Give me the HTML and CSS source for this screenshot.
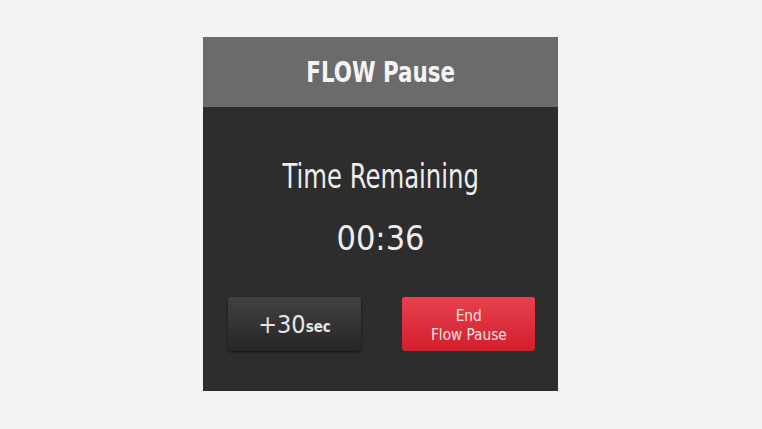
FILE: index.html
```html
<!DOCTYPE html>
<html>
<head>
<meta charset="utf-8">
<link rel="stylesheet" href="styles.css">
</head>
<body>
<div class="panel">
  <div class="header"><span class="narrow">FLOW Pause</span></div>
  <div class="body">
    <div class="label"><span class="narrow">Time Remaining</span></div>
    <div class="time">00:36</div>
    <div class="buttons">
      <div class="btn btn-dark">+30<span class="unit">sec</span></div>
      <div class="btn btn-red">
        <div class="red-text">
          <span class="red-line">End</span>
          <span class="red-line">Flow Pause</span>
        </div>
      </div>
    </div>
  </div>
</div>
</body>
</html>
```
FILE: styles.css
```css
html, body {
  margin: 0;
  padding: 0;
  background: #f3f3f1;
}
body {
  width: 762px;
  height: 429px;
  font-family: "DejaVu Sans Condensed", "Liberation Sans", sans-serif;
  font-stretch: condensed;
}
.panel {
  margin: 37px 0 0 203px;
  width: 355px;
  height: 354px;
  background: #2d2d2d;
  display: flex;
  flex-direction: column;
}
.narrow {
  display: inline-block;
  transform: scaleX(0.82);
  white-space: nowrap;
}
.header {
  height: 70px;
  background: #6b6b6b;
  color: #f4f4f4;
  font-weight: bold;
  font-size: 29px;
  display: flex;
  align-items: center;
  justify-content: center;
}
.body {
  flex: 1;
  display: flex;
  flex-direction: column;
  align-items: center;
  color: #ededed;
}
.label {
  margin-top: 52px;
  font-size: 33px;
  line-height: 36px;
}
.time {
  margin-top: 24px;
  font-size: 34px;
  line-height: 38px;
}
.buttons {
  margin-top: 40px;
  width: 100%;
  display: flex;
  justify-content: space-between;
  padding: 0 23px 0 25px;
  box-sizing: border-box;
}
.btn {
  width: 133px;
  height: 54px;
  border-radius: 3px;
  display: flex;
  align-items: center;
  justify-content: center;
  text-align: center;
  box-sizing: border-box;
}
.btn-dark {
  background: linear-gradient(#414141, #262626);
  color: #e6e6e6;
  font-size: 25px;
  box-shadow: 0 1px 3px rgba(0,0,0,0.6);
}
.unit {
  font-size: 15px;
  font-weight: bold;
  margin-top: 6px;
}
.btn-red {
  background: linear-gradient(#e9414f, #d11f2d);
  color: #fbe2e2;
  font-size: 16px;
}
.red-text {
  display: flex;
  flex-direction: column;
  align-items: center;
  padding-top: 2px;
}
.red-line {
  display: block;
  line-height: 19px;
  transform: scaleX(0.95);
  white-space: nowrap;
}
```
